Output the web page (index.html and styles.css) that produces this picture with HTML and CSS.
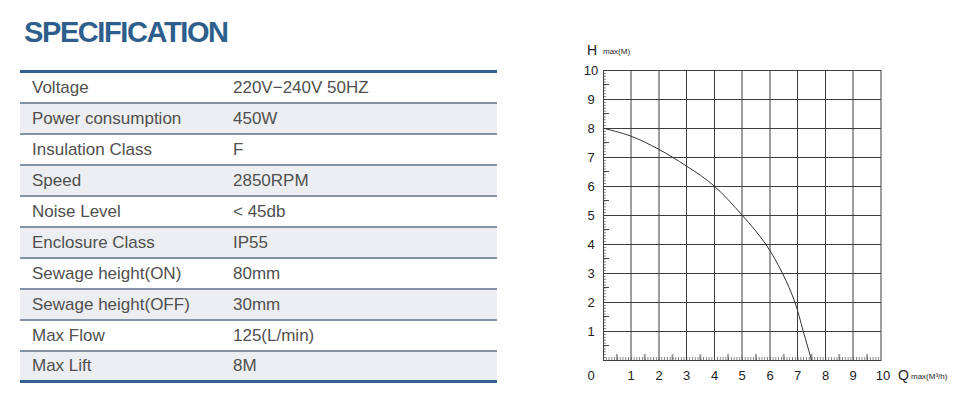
FILE: index.html
```html
<!doctype html>
<html>
<head>
<meta charset="utf-8">
<title>Specification</title>
<link rel="stylesheet" href="styles.css">
</head>
<body>
<div class="page">
	<div class="spec">
		<h1 class="title">SPECIFICATION</h1>
		<table class="spec_table">
			<tr><td>Voltage</td><td>220V&minus;240V 50HZ</td></tr>
			<tr class="alt"><td>Power consumption</td><td>450W</td></tr>
			<tr><td>Insulation Class</td><td>F</td></tr>
			<tr class="alt"><td>Speed</td><td>2850RPM</td></tr>
			<tr><td>Noise Level</td><td>&lt; 45db</td></tr>
			<tr class="alt"><td>Enclosure Class</td><td>IP55</td></tr>
			<tr><td>Sewage height(ON)</td><td>80mm</td></tr>
			<tr class="alt"><td>Sewage height(OFF)</td><td>30mm</td></tr>
			<tr><td>Max Flow</td><td>125(L/min)</td></tr>
			<tr class="alt"><td>Max Lift</td><td>8M</td></tr>
		</table>
	</div>
	<div class="curve">
		<svg class="chart" width="390" height="370" viewBox="570 30 390 370">
			<defs>
				<pattern id="tickX" patternUnits="userSpaceOnUse" x="603" y="357" width="2.78" height="3">
					<line x1="0.4" y1="0" x2="0.4" y2="3" stroke="#555" stroke-width="0.8"/>
				</pattern>
				<pattern id="midX" patternUnits="userSpaceOnUse" x="603" y="354" width="27.8" height="6">
					<line x1="13.9" y1="0" x2="13.9" y2="6" stroke="#444" stroke-width="1"/>
				</pattern>
				<pattern id="tickY" patternUnits="userSpaceOnUse" x="603" y="70" width="3" height="2.9">
					<line x1="0" y1="0.4" x2="3" y2="0.4" stroke="#555" stroke-width="0.8"/>
				</pattern>
				<pattern id="midY" patternUnits="userSpaceOnUse" x="603" y="70" width="6" height="29">
					<line x1="0" y1="14.5" x2="6" y2="14.5" stroke="#444" stroke-width="1"/>
				</pattern>
			</defs>

			<!-- minor ticks -->
			<rect x="604" y="357" width="277" height="3" fill="url(#tickX)"/>
			<rect x="604" y="354" width="277" height="6" fill="url(#midX)"/>
			<rect x="603" y="71" width="3" height="289" fill="url(#tickY)"/>
			<rect x="603" y="71" width="6" height="289" fill="url(#midY)"/>

			<!-- grid -->
			<g class="grid">
				<path d="M631 70V360 M659 70V360 M686.5 70V360 M714.5 70V360 M742 70V360 M770 70V360 M797.5 70V360 M825.5 70V360 M853 70V360"/>
				<path d="M603 99.5H881 M603 128.5H881 M603 157.5H881 M603 186.5H881 M603 215.5H881 M603 244.5H881 M603 273.5H881 M603 302.5H881 M603 331.5H881"/>
				<rect x="603.5" y="70.5" width="277.5" height="290"/>
			</g>

			<!-- pump curve -->
			<path class="line" d="M603 128 C607.6 129.4 621.5 132.6 630.8 136.1 C640.1 139.6 649.3 144.2 658.6 149.2 C667.9 154.2 677.1 159.9 686.4 166 C695.7 172.1 704.9 177.8 714.2 186 C723.5 194.2 733.4 205.3 742 215 C750.6 224.7 758.9 234.3 765.6 244 C772.3 253.7 777.4 263.3 782.3 273 C787.2 282.7 791.3 292.3 794.8 302 C798.3 311.7 800.4 321.3 803.2 331 C806 340.7 810.1 355.2 811.5 360"/>

			<g class="num">
				<text x="591" y="74.5">10</text>
				<text x="591" y="103.5">9</text>
				<text x="591" y="132.5">8</text>
				<text x="591" y="161.5">7</text>
				<text x="591" y="190.5">6</text>
				<text x="591" y="219.5">5</text>
				<text x="591" y="248.5">4</text>
				<text x="591" y="277.5">3</text>
				<text x="591" y="306.5">2</text>
				<text x="591" y="335.5">1</text>

				<text x="591" y="379.5">0</text>
				<text x="631" y="379.5">1</text>
				<text x="659" y="379.5">2</text>
				<text x="686.5" y="379.5">3</text>
				<text x="714.5" y="379.5">4</text>
				<text x="742" y="379.5">5</text>
				<text x="770" y="379.5">6</text>
				<text x="797.5" y="379.5">7</text>
				<text x="825.5" y="379.5">8</text>
				<text x="853" y="379.5">9</text>
				<text x="883" y="379.5">10</text>
			</g>
			<text class="axis" x="587" y="55">H</text>
			<text class="unit" x="603" y="54">max(M)</text>
			<text class="axis" x="898" y="379.5">Q</text>
			<text class="unit" x="911" y="378.5">max(M³/h)</text>
		</svg>
	</div>
</div>
</body>
</html>
```
FILE: styles.css
```css
*{margin:0; padding:0;}
body{background:#fff; font-family:"Liberation Sans", Arial, sans-serif;}
.page{display:flex; width:960px; height:408px; overflow:hidden;}

.spec{width:477px; padding-left:20px;}
.title{margin:16px 0 21px 4px; font-size:29px; line-height:33px; font-weight:bold; color:#2e5e8c; letter-spacing:-1.4px;}

.spec_table{width:477px; border-collapse:separate; border-spacing:0; border-top:3px solid #34628e; border-bottom:3px solid #34628e;}
.spec_table td{height:29px; padding:0 0 0 12px; border-bottom:2px solid #8393a5; font-size:17px; color:#505050; vertical-align:middle; white-space:nowrap;}
.spec_table td:first-child{width:189px;}
.spec_table tr.alt td{background:#eceef1;}
.spec_table tr:last-child td{height:28px; border-bottom:0;}

.curve{margin:30px 0 0 73px;}
.chart{display:block;}
.chart .grid{fill:none; stroke:#3d3d3d; stroke-width:1;}
.chart .line{fill:none; stroke:#333; stroke-width:1;}
.chart text{font-family:"Liberation Sans", Arial, sans-serif; fill:#222;}
.chart .num text{font-size:13px; text-anchor:middle;}
.chart .axis{font-size:14px;}
.chart .unit{font-size:8px;}
```
